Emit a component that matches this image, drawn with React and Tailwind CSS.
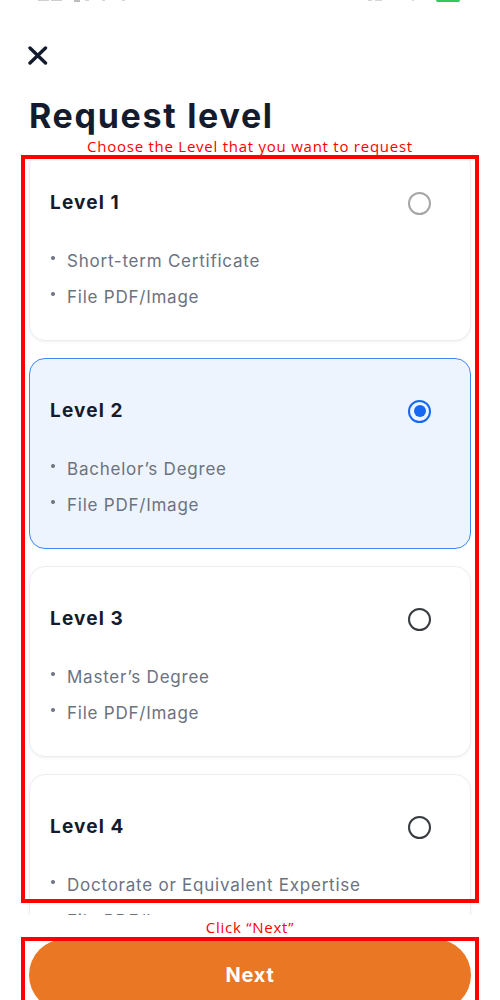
import React, { useState } from 'react';

const levels = [
  { id: 1, title: 'Level 1', items: ['Short-term Certificate', 'File PDF/Image'], muted: true },
  { id: 2, title: 'Level 2', items: ['Bachelor\u2019s Degree', 'File PDF/Image'] },
  { id: 3, title: 'Level 3', items: ['Master\u2019s Degree', 'File PDF/Image'] },
  { id: 4, title: 'Level 4', items: ['Doctorate or Equivalent Expertise', 'File PDF/Image'] },
];

function Radio({ checked, muted }) {
  if (checked) {
    return (
      <span className="flex h-[23px] w-[23px] items-center justify-center rounded-full border-[2.5px] border-[#1668f2]">
        <span className="h-[12px] w-[12px] rounded-full bg-[#1668f2]" />
      </span>
    );
  }
  return (
    <span
      className={`block h-[23px] w-[23px] rounded-full border-2 ${
        muted ? 'border-[#a6a6a6]' : 'border-[#383b42]'
      }`}
    />
  );
}

function LevelCard({ level, selected, onSelect }) {
  return (
    <div
      role="radio"
      aria-checked={selected}
      onClick={onSelect}
      className={`h-[191px] w-full shrink-0 cursor-pointer rounded-2xl border pl-5 pr-[39px] pt-10 ${
        selected
          ? 'border-[#3d86f5] bg-[#eef4fe]'
          : 'border-[#eceef1] bg-white shadow-[0_1px_3px_rgba(0,0,0,0.06)]'
      }`}
    >
      <div className="flex h-6 items-center justify-between">
        <span className="text-[19px] font-bold leading-6 tracking-[0.06em] text-[#141b2d]">
          {level.title}
        </span>
        <Radio checked={selected} muted={level.muted} />
      </div>
      <ul className="mt-[28px]">
        {level.items.map((item) => (
          <li
            key={item}
            className="flex items-start whitespace-nowrap text-[17px] leading-9 tracking-[0.045em] text-[#6b7280]"
          >
            <span className="ml-[1px] mr-[12px] mt-[13px] h-[4px] w-[4px] shrink-0 rounded-full bg-[#6b7280]" />
            {item}
          </li>
        ))}
      </ul>
    </div>
  );
}

function StatusBar() {
  // only the bottom sliver of the status bar is still on screen
  return (
    <div className="flex h-[3px] items-start justify-between pl-[38px] pr-[40px]">
      <div className="flex items-start gap-[2px]">
        <span className="h-[1px] w-[11px] bg-[#cfcfcf]" />
        <span className="h-[1px] w-[11px] bg-[#cfcfcf]" />
        <span className="ml-[10px] h-[2px] w-[6px] bg-[#bdbdbd]" />
        <span className="ml-[3px] h-[1px] w-[4px] bg-[#d6d6d6]" />
        <span className="ml-[11px] h-[1px] w-[3px] bg-[#d6d6d6]" />
        <span className="ml-[15px] h-[1px] w-[3px] bg-[#d6d6d6]" />
      </div>
      <div className="flex items-start gap-[3px]">
        <span className="h-[1px] w-[4px] bg-[#d6d6d6]" />
        <span className="h-[1px] w-[7px] bg-[#d6d6d6]" />
        <span className="ml-[27px] h-[1px] w-[2px] bg-[#d6d6d6]" />
        <span className="ml-[19px] h-[2px] w-[24px] rounded-b-sm bg-[#34c759]" />
      </div>
    </div>
  );
}

export default function App() {
  const [selected, setSelected] = useState(2);

  return (
    <div className="relative h-[1000px] w-[500px] overflow-hidden bg-white font-['Inter',sans-serif]">
      <StatusBar />

      <div className="pl-[28px] pt-[43px]">
        <svg width="20" height="19" viewBox="0 0 20 19" fill="none">
          <path d="M2 2L17.5 17M17.5 2L2 17" stroke="#141b2d" strokeWidth="3.4" strokeLinecap="round" />
        </svg>
      </div>

      <h1 className="mt-[30px] pl-[29px] text-[34px] font-bold leading-[41px] tracking-[0.05em] text-[#141b2d]">
        Request level
      </h1>

      <p className="mt-[1px] text-center font-['Open_Sans',sans-serif] text-[15px] leading-[18px] tracking-[0.05em] text-[#ff0000]">
        Choose the Level that you want to request
      </p>

      <div className="mt-[5px] h-[755px] overflow-hidden px-[29px]">
        <div className="-mt-[10px] flex flex-col gap-[17px]">
          {levels.map((level) => (
            <LevelCard
              key={level.id}
              level={level}
              selected={selected === level.id}
              onSelect={() => setSelected(level.id)}
            />
          ))}
        </div>
      </div>

      <p className="mt-[3px] text-center font-['Open_Sans',sans-serif] text-[15px] leading-[18px] tracking-[0.05em] text-[#ff0000]">
        Click {'\u201c'}Next{'\u201d'}
      </p>

      <div className="mt-[3px] px-[29px]">
        <button
          type="button"
          className="flex h-[72px] w-full items-center justify-center rounded-full bg-[#e97724] text-[20px] font-bold tracking-[0.04em] text-white"
        >
          Next
        </button>
      </div>

      {/* annotation frames */}
      <div className="pointer-events-none absolute left-[21px] top-[155px] h-[748px] w-[458px] border-4 border-[#ff0000]" />
      <div className="pointer-events-none absolute left-[21px] top-[937px] h-[80px] w-[458px] border-4 border-[#ff0000]" />
    </div>
  );
}
